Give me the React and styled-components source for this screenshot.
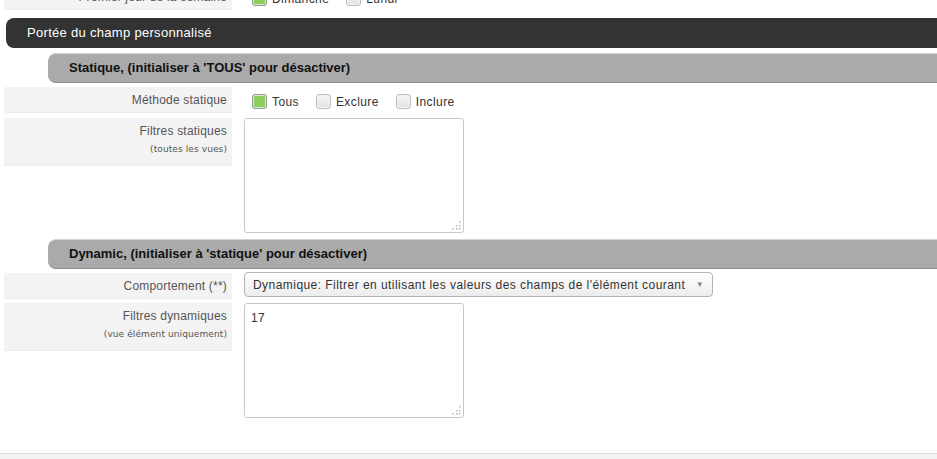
import React from "react";
import styled, { createGlobalStyle } from "styled-components";

const Global = createGlobalStyle`
  html, body {
    margin: 0;
    padding: 0;
    background: #fff;
    font-family: "Liberation Sans", Arial, sans-serif;
    overflow: hidden;
  }
`;

const Page = styled.div`
  width: 937px;
  height: 459px;
  display: flex;
  flex-direction: column;
  position: relative;
  overflow: hidden;
`;

const Body = styled.div`
  display: flex;
  flex-direction: column;
  margin-top: -16px;
  flex: 1;
`;

const SectionHeader = styled.div`
  margin: 8px 0 0 6px;
  height: 30px;
  line-height: 30px;
  padding-left: 21px;
  background: #333;
  color: #fff;
  font-size: 13px;
  letter-spacing: 0.3px;
  border-radius: 8px 0 0 8px;
`;

const SubHeader = styled.div`
  margin: ${(p) => p.$top ?? 5}px 0 0 48px;
  height: 28px;
  line-height: 28px;
  padding-left: 21px;
  background: #aaa;
  border-top: 1px solid #d4d4d4;
  border-bottom: 1px solid #8c8c8c;
  border-radius: 8px 0 0 8px;
  color: #111;
  font-size: 13px;
  font-weight: bold;
`;

const Row = styled.div`
  display: grid;
  grid-template-columns: 228px auto;
  column-gap: 12px;
  align-items: start;
  margin: ${(p) => p.$top ?? 4}px 0 0 4px;
`;

const Label = styled.div`
  background: #f3f3f3;
  border-bottom: 1px solid #ececec;
  text-align: right;
  padding: ${(p) => (p.$tall ? "6px 5px 9px" : "0 5px")};
  height: ${(p) => (p.$tall ? "auto" : "26px")};
  line-height: ${(p) => (p.$tall ? "15px" : "26px")};
  box-sizing: border-box;
  color: #555;
  font-size: 12px;
  letter-spacing: 0.2px;
`;

const Hint = styled.div`
  font-family: "DejaVu Sans", Verdana, sans-serif;
  font-size: 9px;
  line-height: 13px;
  margin-top: 4px;
  letter-spacing: 0.1px;
`;

const Checks = styled.div`
  display: flex;
  align-items: center;
  height: 26px;
  box-sizing: border-box;
  padding: 3px 0 0 8px;
`;

const CheckItem = styled.label`
  display: flex;
  align-items: center;
  gap: 5px;
  margin-right: 17px;
  font-size: 12px;
  letter-spacing: 0.4px;
  color: #333;
`;

const Box = styled.span`
  width: 13px;
  height: 13px;
  border: 1px solid ${(p) => (p.$on ? "#9a9a9a" : "#bdbdbd")};
  border-radius: 3px;
  box-shadow: inset 0 0 0 1px ${(p) => (p.$on ? "#d8ecc8" : "#f4f4f4")};
  background: ${(p) =>
    p.$on ? "#8ccf5a" : "linear-gradient(#f6f6f6, #e2e2e2)"};
`;

const AreaWrap = styled.div`
  position: relative;
  width: 220px;
  height: 115px;
`;

const Area = styled.textarea`
  display: block;
  width: 220px;
  height: 115px;
  box-sizing: border-box;
  border: 1px solid #c8c8c8;
  border-radius: 3px;
  padding: 7px 6px;
  resize: none;
  font-family: "Liberation Sans", Arial, sans-serif;
  font-size: 12px;
  letter-spacing: 0.3px;
  color: #333;
  outline: none;
  background: #fff;
`;

const Grip = styled.svg`
  position: absolute;
  right: 3px;
  bottom: 3px;
`;

const Select = styled.div`
  width: 469px;
  height: 25px;
  box-sizing: border-box;
  border: 1px solid #b4b4b4;
  border-radius: 4px;
  background: linear-gradient(#ffffff, #ececec);
  display: flex;
  align-items: center;
  justify-content: space-between;
  padding: 0 8px 0 8px;
  font-size: 12px;
  letter-spacing: 0.45px;
  color: #333;
  margin-top: -1px;
`;

const Arrow = styled.span`
  font-size: 8px;
  color: #888;
`;

const Footer = styled.div`
  position: absolute;
  left: 0;
  right: 0;
  top: 453px;
  height: 6px;
  border-top: 1px solid #dcdcdc;
  background: #f2f2f2;
`;

function Check({ on, children }) {
  return (
    <CheckItem>
      <Box $on={on} />
      {children}
    </CheckItem>
  );
}

function TextArea({ value }) {
  return (
    <AreaWrap>
      <Area defaultValue={value} />
      <Grip width="11" height="10" viewBox="0 0 11 10">
        {[
          [9, 1],
          [6, 5],
          [9, 5],
          [2, 8],
          [6, 8],
          [9, 8],
        ].map(([x, y], i) => (
          <rect key={i} x={x} y={y} width="1.5" height="1.5" fill="#b8b8b8" />
        ))}
      </Grip>
    </AreaWrap>
  );
}

export default function App() {
  return (
    <Page>
      <Global />
      <Body>
        <Row $top={0}>
          <Label>Premier jour de la semaine</Label>
          <Checks>
            <Check on>Dimanche</Check>
            <Check>Lundi</Check>
          </Checks>
        </Row>

        <SectionHeader>Portée du champ personnalisé</SectionHeader>

        <SubHeader>Statique, (initialiser à 'TOUS' pour désactiver)</SubHeader>
        <Row>
          <Label>Méthode statique</Label>
          <Checks>
            <Check on>Tous</Check>
            <Check>Exclure</Check>
            <Check>Inclure</Check>
          </Checks>
        </Row>
        <Row $top={5}>
          <Label $tall>
            Filtres statiques
            <Hint>(toutes les vues)</Hint>
          </Label>
          <TextArea value="" />
        </Row>

        <SubHeader $top={6}>
          Dynamic, (initialiser à 'statique' pour désactiver)
        </SubHeader>
        <Row>
          <Label>Comportement (**)</Label>
          <Select>
            Dynamique: Filtrer en utilisant les valeurs des champs de l'élément courant
            <Arrow>▼</Arrow>
          </Select>
        </Row>
        <Row>
          <Label $tall>
            Filtres dynamiques
            <Hint>(vue élément uniquement)</Hint>
          </Label>
          <TextArea value="17" />
        </Row>
      </Body>
      <Footer />
    </Page>
  );
}
